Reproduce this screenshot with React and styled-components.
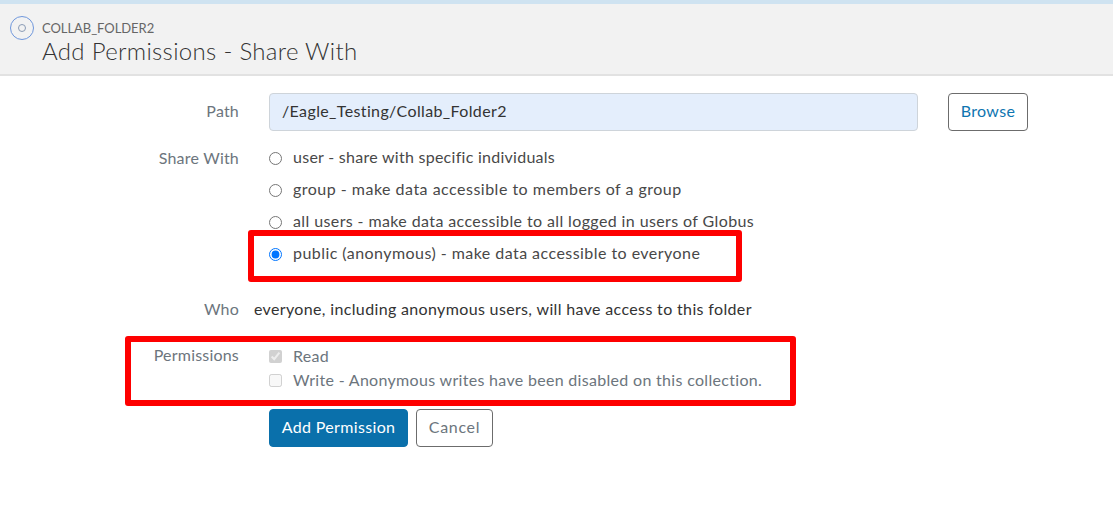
import React from "react";
import styled, { createGlobalStyle } from "styled-components";

const GlobalStyle = createGlobalStyle`
	html, body {
		margin: 0;
		padding: 0;
		background: #fff;
	}
	body {
		font-family: "Lato", "Open Sans", sans-serif;
		font-size: 16px;
		color: #333;
	}
`;

const shareOptions = [
	{ id: "user", label: "user - share with specific individuals", tracking: 0.27 },
	{ id: "group", label: "group - make data accessible to members of a group", tracking: 0.49 },
	{ id: "all", label: "all users - make data accessible to all logged in users of Globus", tracking: 0.39 },
	{ id: "public", label: "public (anonymous) - make data accessible to everyone", tracking: 0.45, checked: true },
];

const App = () => {
	return (
		<Page>
			<GlobalStyle />
			<TopStrip />
			<Header>
				<CollectionIcon viewBox="0 0 24 24">
					<circle cx="12" cy="12" r="11.5" fill="none" stroke="#6f97dc" strokeWidth="1" />
					<circle cx="12" cy="12" r="3.5" fill="none" stroke="#8a9bb5" strokeWidth="1" />
				</CollectionIcon>
				<HeaderText>
					<Overline>COLLAB_FOLDER2</Overline>
					<Title>Add Permissions - Share With</Title>
				</HeaderText>
			</Header>

			<Form>
				<PathRow>
					<Label>Path</Label>
					<PathInput readOnly value="/Eagle_Testing/Collab_Folder2" />
					<BrowseButton type="button">Browse</BrowseButton>
				</PathRow>

				<ShareRow>
					<Label>Share With</Label>
					<RadioList>
						{shareOptions.map((option) => (
							<RadioRow key={option.id} $tracking={option.tracking}>
								<Radio type="radio" name="share" defaultChecked={option.checked} />
								<span>{option.label}</span>
							</RadioRow>
						))}
					</RadioList>
				</ShareRow>

				<WhoRow>
					<Label>Who</Label>
					<WhoText>everyone, including anonymous users, will have access to this folder</WhoText>
				</WhoRow>

				<PermissionsRow>
					<Label>Permissions</Label>
					<CheckList>
						<CheckRow>
							<Check type="checkbox" defaultChecked disabled />
							<span>Read</span>
						</CheckRow>
						<CheckRow>
							<Check type="checkbox" disabled />
							<span>Write - Anonymous writes have been disabled on this collection.</span>
						</CheckRow>
					</CheckList>
				</PermissionsRow>

				<Actions>
					<PrimaryButton type="button">Add Permission</PrimaryButton>
					<CancelButton type="button">Cancel</CancelButton>
				</Actions>
			</Form>

			<PublicHighlight />
			<PermissionsHighlight />
		</Page>
	);
};

const Page = styled.div`
	position: relative;
	width: 1113px;
	height: 508px;
	overflow: hidden;
	background: #fff;
`;

const TopStrip = styled.div`
	height: 4px;
	background: #cfe3f1;
`;

const Header = styled.header`
	display: flex;
	align-items: flex-start;
	height: 72px;
	box-sizing: border-box;
	padding: 12px 0 0 10px;
	background: #f2f2f2;
	border-bottom: 2px solid #e2e2e2;
`;

const CollectionIcon = styled.svg`
	width: 24px;
	height: 24px;
	flex: none;
`;

const HeaderText = styled.div`
	display: flex;
	flex-direction: column;
	margin-left: 8px;
`;

const Overline = styled.div`
	font-size: 13px;
	line-height: 16px;
	margin-top: 4px;
	letter-spacing: -0.05px;
	color: #666;
`;

const Title = styled.h1`
	margin: 0;
	font-size: 24px;
	line-height: 30px;
	font-weight: 300;
	letter-spacing: 0.32px;
	color: #333;
`;

const Form = styled.div`
	display: flex;
	flex-direction: column;
	padding-top: 17px;
`;

const Row = styled.div`
	display: grid;
	grid-template-columns: 239px 1fr;
	column-gap: 30px;
`;

const Label = styled.div`
	text-align: right;
	font-size: 16px;
	line-height: 22px;
	letter-spacing: 0.2px;
	color: #6c757d;
`;

const PathRow = styled(Row)`
	grid-template-columns: 239px 649px 80px;
	align-items: center;
	height: 38px;

	${Label} {
		line-height: 36px;
		padding-bottom: 2px;
	}
`;

const PathInput = styled.input`
	box-sizing: border-box;
	width: 649px;
	height: 38px;
	padding: 0 12px 3px;
	border: 1px solid #ced4da;
	border-radius: 4px;
	background: #e4eefc;
	outline: none;
	font-family: inherit;
	font-size: 16px;
	letter-spacing: 0.37px;
	color: #333;
`;

const OutlineButton = styled.button`
	box-sizing: border-box;
	height: 38px;
	background: #fff;
	border: 1px solid #6c6c6c;
	border-radius: 4px;
	font-family: inherit;
	font-size: 16px;
	letter-spacing: 0.35px;
	padding: 0 0 4px;
`;

const BrowseButton = styled(OutlineButton)`
	width: 80px;
	color: #0f75b0;
`;

const ShareRow = styled(Row)`
	margin-top: 16px;
`;

const RadioList = styled.div`
	display: flex;
	flex-direction: column;
	gap: 10px;
`;

const RadioRow = styled.label`
	display: flex;
	align-items: center;
	height: 22px;
	font-size: 16px;
	letter-spacing: ${(props) => props.$tracking}px;
	color: #484848;

	span {
		margin-bottom: 3px;
	}
`;

const Radio = styled.input`
	width: 13px;
	height: 13px;
	margin: 0 11px 0 0;
	flex: none;
`;

const WhoRow = styled(Row)`
	column-gap: 15px;
	margin-top: 33px;
`;

const WhoText = styled.div`
	font-size: 16px;
	line-height: 22px;
	letter-spacing: 0.35px;
	color: #333;
`;

const PermissionsRow = styled(Row)`
	margin-top: 24px;
`;

const CheckList = styled.div`
	display: flex;
	flex-direction: column;
`;

const CheckRow = styled.label`
	display: flex;
	align-items: center;
	height: 24px;
	font-size: 16px;
	letter-spacing: 0.31px;
	color: #6c757d;

	span {
		margin-bottom: 2px;
	}
`;

const Check = styled.input`
	width: 13px;
	height: 13px;
	margin: 0 11px 0 0;
	flex: none;
`;

const Actions = styled.div`
	display: flex;
	gap: 8px;
	margin: 17px 0 0 269px;
`;

const PrimaryButton = styled.button`
	box-sizing: border-box;
	width: 139px;
	height: 38px;
	padding: 0 0 4px;
	background: #0a70ab;
	border: 1px solid #0a70ab;
	border-radius: 4px;
	font-family: inherit;
	font-size: 16px;
	letter-spacing: 0.35px;
	color: #fff;
`;

const CancelButton = styled(OutlineButton)`
	width: 77px;
	letter-spacing: 0.7px;
	color: #6c757d;
`;

const Highlight = styled.div`
	position: absolute;
	box-sizing: border-box;
	border: 6px solid #fe0000;
	border-radius: 3px;
	pointer-events: none;
`;

const PublicHighlight = styled(Highlight)`
	left: 248px;
	top: 230px;
	width: 494px;
	height: 52px;
`;

const PermissionsHighlight = styled(Highlight)`
	left: 125px;
	top: 336px;
	width: 671px;
	height: 70px;
`;

export default App;
